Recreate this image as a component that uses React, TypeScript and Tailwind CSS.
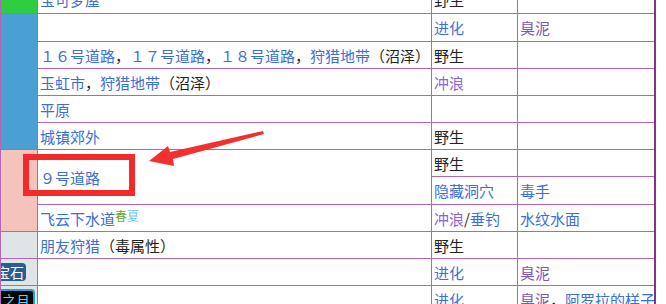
import React from 'react';

const B = 'text-[#3b6fd6]';
const V = 'text-[#8a66d6]';
const P = 'text-[#7d58b8]';
const K = 'text-[#222]';

const td = 'border border-[#b565b5] px-[2px] align-middle whitespace-nowrap';

export default function App() {
  return (
    <div className="relative w-[666px] h-[304px] overflow-hidden bg-white" style={{ fontFamily: '"Noto Sans CJK SC", "Noto Sans", sans-serif' }}>
      <table className="-mt-[15px] border-collapse table-fixed w-[654px] text-[15px] leading-none border-r-2 border-r-[#8b2f8b]">
        <colgroup>
          <col className="w-[37px]" />
          <col className="w-[394px]" />
          <col className="w-[86px]" />
          <col className="w-[137px]" />
        </colgroup>
        <tbody>
          <tr className="h-[28px]">
            <td className={`${td} bg-[#2ecc40]`} />
            <td className={`${td} ${B}`}>宝可梦屋</td>
            <td className={`${td} ${K}`}>野生</td>
            <td className={td} />
          </tr>
          <tr className="h-[28px]">
            <td className={`${td} bg-[#4ba0d3]`} rowSpan={5} />
            <td className={td} />
            <td className={`${td} ${B}`}>进化</td>
            <td className={`${td} ${P}`}>臭泥</td>
          </tr>
          <tr className="h-[27px]">
            <td className={td}>
              <span className={B}>１６号道路</span><span className={K}>，</span>
              <span className={B}>１７号道路</span><span className={K}>，</span>
              <span className={B}>１８号道路</span><span className={K}>，</span>
              <span className={B}>狩猎地带</span><span className={K}>（沼泽）</span>
            </td>
            <td className={`${td} ${K}`}>野生</td>
            <td className={td} />
          </tr>
          <tr className="h-[27px]">
            <td className={td}>
              <span className={B}>玉虹市</span><span className={K}>，</span>
              <span className={B}>狩猎地带</span><span className={K}>（沼泽）</span>
            </td>
            <td className={`${td} ${V}`}>冲浪</td>
            <td className={td} />
          </tr>
          <tr className="h-[27px]">
            <td className={`${td} ${B}`}>平原</td>
            <td className={td} />
            <td className={td} />
          </tr>
          <tr className="h-[27px]">
            <td className={`${td} ${B}`}>城镇郊外</td>
            <td className={`${td} ${K}`}>野生</td>
            <td className={td} />
          </tr>
          <tr className="h-[27px]">
            <td className={`${td} bg-[#f4c3bc]`} rowSpan={3} />
            <td className={`${td} ${B}`} rowSpan={2}>９号道路</td>
            <td className={`${td} ${K}`}>野生</td>
            <td className={td} />
          </tr>
          <tr className="h-[28px]">
            <td className={`${td} ${B}`}>隐藏洞穴</td>
            <td className={`${td} ${B}`}>毒手</td>
          </tr>
          <tr className="h-[27px]">
            <td className={td}>
              <span className={B}>飞云下水道</span>
              <sup className="text-[12px] relative -top-[4px]">
                <span className="text-[#6aa82a]">春</span>
                <span className="text-[#6cc8ee]">夏</span>
              </sup>
            </td>
            <td className={td}>
              <span className={V}>冲浪</span><span className={K}>/</span><span className={B}>垂钓</span>
            </td>
            <td className={`${td} ${B}`}>水纹水面</td>
          </tr>
          <tr className="h-[27px]">
            <td className={`${td} bg-[#dfe4e6]`} />
            <td className={td}>
              <span className={B}>朋友狩猎</span><span className={K}>（毒属性）</span>
            </td>
            <td className={`${td} ${K}`}>野生</td>
            <td className={td} />
          </tr>
          <tr className="h-[27px]">
            <td className={`${td} bg-[#dfe4e6] px-0 overflow-hidden`}>
              <span className="inline-block -ml-[9px] rounded-[4px] bg-[#2b5d92] text-white px-[2px] py-[2px] text-[14px]">宝石</span>
            </td>
            <td className={td} />
            <td className={`${td} ${B}`}>进化</td>
            <td className={`${td} ${P}`}>臭泥</td>
          </tr>
          <tr className="h-[27px]">
            <td className={`${td} bg-[#dfe4e6] px-0 overflow-hidden`}>
              <span className="inline-block -ml-[6px] mt-[1px] rounded-[4px] bg-black border-2 border-[#23a3d6] text-[#5fd2f2] px-[3px] py-[2px] text-[14px]">之月</span>
            </td>
            <td className={td} />
            <td className={`${td} ${B}`}>进化</td>
            <td className={td}>
              <span className={P}>臭泥</span><span className={K}>，</span><span className={B}>阿罗拉的样子</span>
            </td>
          </tr>
        </tbody>
      </table>

      {/* red annotation box */}
      <div className="absolute left-[23px] top-[154px] w-[112px] h-[42px] border-[6px] border-[#f22a2a]" />

      {/* red arrow */}
      <svg className="absolute left-0 top-0" width="666" height="304" viewBox="0 0 666 304">
        <polygon points="263,131 264,134 173,159 174,166 149,161 168,146 170,152" fill="#f23030" />
      </svg>
    </div>
  );
}
